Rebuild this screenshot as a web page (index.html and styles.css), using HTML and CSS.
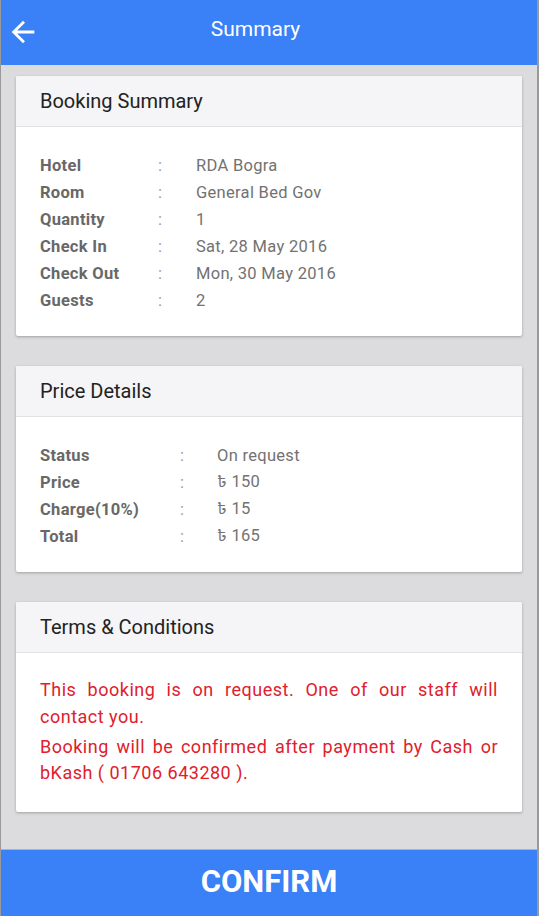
FILE: index.html
```html
<!DOCTYPE html>
<html lang="en">
<head>
<meta charset="utf-8">
<title>Summary</title>
<link rel="stylesheet" href="styles.css">
</head>
<body>
<div class="frame">
  <header class="topbar">
    <button class="back" aria-label="Back">
      <svg width="34" height="34" viewBox="0 0 24 24"><path d="M20 11H7.83l5.59-5.59L12 4l-8 8 8 8 1.41-1.41L7.83 13H20v-2z" fill="#fff"/></svg>
    </button>
    <h1 class="title">Summary</h1>
  </header>
  <main class="content">
    <section class="card">
      <div class="card-head">Booking Summary</div>
      <div class="card-body">
        <dl class="rows rows-booking">
          <dt>Hotel</dt><dd class="colon">:</dd><dd>RDA Bogra</dd>
          <dt>Room</dt><dd class="colon">:</dd><dd>General Bed Gov</dd>
          <dt>Quantity</dt><dd class="colon">:</dd><dd>1</dd>
          <dt>Check In</dt><dd class="colon">:</dd><dd>Sat, 28 May 2016</dd>
          <dt>Check Out</dt><dd class="colon">:</dd><dd>Mon, 30 May 2016</dd>
          <dt>Guests</dt><dd class="colon">:</dd><dd>2</dd>
        </dl>
      </div>
    </section>
    <section class="card">
      <div class="card-head">Price Details</div>
      <div class="card-body">
        <dl class="rows rows-price">
          <dt>Status</dt><dd class="colon">:</dd><dd>On request</dd>
          <dt>Price</dt><dd class="colon">:</dd><dd><span class="tk">৳</span> 150</dd>
          <dt>Charge(10%)</dt><dd class="colon">:</dd><dd><span class="tk">৳</span> 15</dd>
          <dt>Total</dt><dd class="colon">:</dd><dd><span class="tk">৳</span> 165</dd>
        </dl>
      </div>
    </section>
    <section class="card">
      <div class="card-head">Terms &amp; Conditions</div>
      <div class="card-body terms">
        <p>This booking is on request. One of our staff will contact you.</p>
        <p>Booking will be confirmed after payment by Cash or bKash ( 01706 643280 ).</p>
      </div>
    </section>
  </main>
  <button class="confirm">CONFIRM</button>
</div>
</body>
</html>
```
FILE: styles.css
```css
* { box-sizing: border-box; }
html, body { margin: 0; padding: 0; }
body {
  font-family: Roboto, "Liberation Sans", Arial, sans-serif;
  background: #dcdbde;
}
.frame {
  min-height: 916px;
  display: flex;
  flex-direction: column;
  border-left: 1px solid #9a9a9a;
  border-right: 2px solid #9a9a9a;
  background: #dcdbde;
}
.topbar {
  height: 65px;
  background: #3a80f6;
  display: flex;
  align-items: center;
}
.back {
  background: none;
  border: 0;
  padding: 0;
  margin: -2px 0 0 5px;
  width: 34px;
  height: 34px;
  display: flex;
  align-items: center;
  justify-content: center;
}
.back svg { width: 34px; height: 34px; display: block; }
.title {
  margin: -7px 0 0;
  flex: 1;
  text-align: center;
  color: #fff;
  font-weight: 400;
  font-size: 21px;
  padding-right: 66px;
}
.content {
  flex: 1;
  padding: 11px 15px 37px;
  display: flex;
  flex-direction: column;
  gap: 30px;
}
.card {
  background: #fff;
  border-radius: 2px;
  box-shadow: 0 1px 3px rgba(0,0,0,0.28);
}
.card-head {
  height: 51px;
  background: #f5f4f6;
  border-bottom: 1px solid #e2e1e4;
  padding: 0 24px;
  display: flex;
  align-items: center;
  font-size: 20px;
  color: #222;
  border-radius: 2px 2px 0 0;
}
.card-body {
  padding: 25px 24px 22px;
}
.rows {
  margin: 0;
  display: grid;
  grid-auto-rows: 27px;
  align-items: center;
  font-size: 16.5px;
  letter-spacing: 0.3px;
}
.rows-booking { grid-template-columns: 118px 38px 1fr; }
.rows-price { grid-template-columns: 140px 37px 1fr; }
.rows dt {
  font-weight: 700;
  color: #686868;
}
.rows dd {
  margin: 0;
  color: #727272;
}
.rows dd.colon { color: #999; }
.tk { font-family: "Noto Sans Bengali", "Lohit Bengali", "FreeSans", sans-serif; }
.terms {
  padding: 24px 24px 25px;
  color: #e0202c;
  font-size: 18px;
  line-height: 26.5px;
  text-align: justify;
  letter-spacing: 0.5px;
}
.terms p { margin: 0; }
.terms p + p { margin-top: 3.5px; }
.confirm {
  height: 67px;
  border: 0;
  border-top: 1px solid #8fb5f5;
  background: #3a80f6;
  color: #fff;
  font-family: Roboto, "Liberation Sans", Arial, sans-serif;
  font-weight: 700;
  font-size: 31px;
  padding: 0 0 4px;
  width: 100%;
}
```
